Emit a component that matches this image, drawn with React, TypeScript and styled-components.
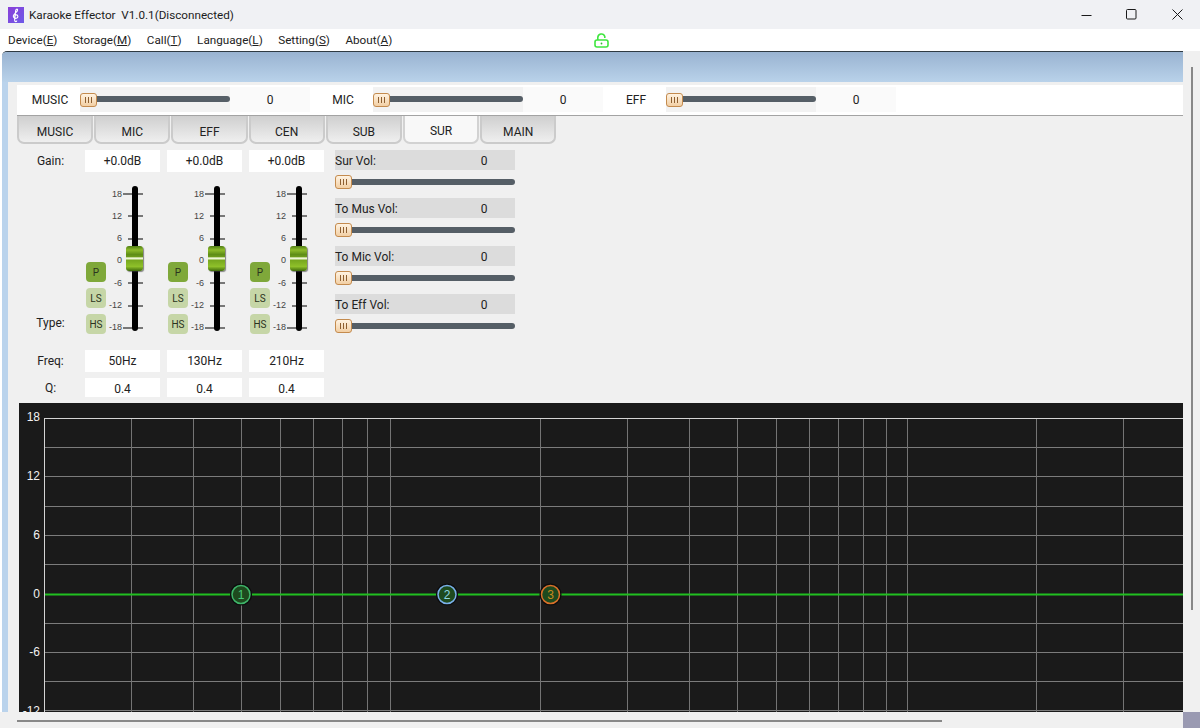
import { Fragment } from 'react';
import styled, { createGlobalStyle } from 'styled-components';

const GlobalStyle = createGlobalStyle`
  html, body {
    margin: 0;
    padding: 0;
    overflow: hidden;
    background: #f0f0f0;
  }
  body {
    font-family: Roboto, "Noto Sans", sans-serif;
    font-size: 12px;
    color: #222;
  }
  * {
    box-sizing: border-box;
  }
`;

const Window = styled.div`
  width: 1200px;
  height: 728px;
  display: flex;
  flex-direction: column;
  overflow: hidden;
`;

const TitleBar = styled.div`
  height: 29px;
  flex: none;
  display: flex;
  align-items: center;
  padding-left: 8px;
  background: #f0f1f4;
`;

const AppIcon = styled.svg`
  width: 16px;
  height: 16px;
  flex: none;
`;

const TitleText = styled.span`
  margin-left: 5px;
  flex: 1;
  font-size: 11.7px;
  color: #1c1c1c;
  white-space: pre;
`;

const WindowButton = styled.button`
  width: 45.5px;
  height: 29px;
  padding: 0;
  border: 0;
  background: none;
  display: flex;
  align-items: center;
  justify-content: center;
`;

const MenuBar = styled.div`
  height: 22px;
  flex: none;
  display: flex;
  align-items: center;
  gap: 15.5px;
  padding-left: 8px;
  background: #fff;
`;

const MenuItem = styled.span`
  font-size: 11.7px;
  color: #222;
  u {
    text-underline-offset: 1px;
  }
`;

const LockIcon = styled.svg`
  width: 15px;
  height: 15px;
  margin-left: 186px;
`;

const Workspace = styled.div`
  flex: 1;
  min-height: 0;
  display: flex;
`;

const Panel = styled.div`
  width: 1183px;
  display: flex;
  flex-direction: column;
  padding-left: 2px;
  background: #fff;
`;

const PanelInner = styled.div`
  flex: 1;
  display: flex;
  flex-direction: column;
  border-top: 1px solid #2f3a42;
  border-top-left-radius: 5px;
  background: #bad3ec;
  overflow: hidden;
`;

const BlueHeader = styled.div`
  height: 30px;
  flex: none;
  background: linear-gradient(#99b3d1, #b9d2ea);
`;

const Content = styled.div`
  flex: 1;
  margin-left: 6px;
  padding: 3px 0 0 9px;
  display: flex;
  flex-direction: column;
  background: #f0f0f0;
`;

const MasterRow = styled.div`
  height: 31px;
  flex: none;
  display: flex;
  align-items: center;
  padding-bottom: 1px;
  background: #fff;
  border-bottom: 1px solid #a3a3a3;
`;

const MasterLabel = styled.span`
  width: 63px;
  padding: 1px 0 0 3px;
  text-align: center;
`;

const MasterValue = styled.span`
  width: 80px;
  height: 25px;
  line-height: 27px;
  text-align: center;
  background: #fafafa;
`;

const SliderBox = styled.div<{ $master?: boolean }>`
  position: relative;
  width: ${(p) => (p.$master ? '150px' : '180px')};
  height: ${(p) => (p.$master ? '25px' : '14px')};
  margin-top: ${(p) => (p.$master ? '0' : '5px')};
  display: flex;
  align-items: center;
  background: ${(p) => (p.$master ? '#f2f2f2' : 'transparent')};
`;

const SliderTrack = styled.div<{ $master?: boolean }>`
  width: 100%;
  height: 6px;
  margin-top: ${(p) => (p.$master ? '-1px' : '0')};
  border-radius: 0 3px 3px 0;
  background: #555e66;
`;

const SliderThumb = styled.div`
  position: absolute;
  left: 0;
  top: 50%;
  width: 17px;
  height: 14px;
  margin-top: -7px;
  display: flex;
  align-items: center;
  justify-content: center;
  border: 1px solid #c48b4e;
  border-radius: 3px;
  background: linear-gradient(#fff3e2, #f2cfa4);
  &::after {
    content: '';
    width: 7px;
    height: 6px;
    background: repeating-linear-gradient(90deg, #8d5f31 0 1px, transparent 1px 3px);
  }
`;

const TabRow = styled.div`
  height: 28px;
  flex: none;
  display: flex;
  gap: 1px;
`;

const Tab = styled.div<{ $active?: boolean }>`
  width: 76.2px;
  height: 28px;
  display: flex;
  align-items: center;
  justify-content: center;
  padding-top: ${(p) => (p.$active ? '4px' : '6px')};
  border: 2px solid ${(p) => (p.$active ? '#d2d2d2' : '#cbcbcb')};
  border-top: 0;
  border-radius: 0 0 7px 7px;
  background: ${(p) => (p.$active ? '#f8f8f8' : 'linear-gradient(#cfcfcf, #efefef)')};
`;

const Controls = styled.div`
  height: 259px;
  flex: none;
  display: flex;
  padding-top: 6px;
`;

const EqGrid = styled.div`
  display: grid;
  grid-template-columns: 61px repeat(3, 75px);
  grid-template-rows: 22px 178px 22px 25px;
  column-gap: 7px;
  height: 247px;
`;

const RowLabel = styled.span<{ $align?: string }>`
  align-self: ${(p) => p.$align || 'center'};
  width: 67px;
  text-align: center;
  line-height: 16px;
  margin-bottom: ${(p) => (p.$align === 'end' ? '19px' : '0')};
`;

const QLabel = styled(RowLabel)`
  align-self: end;
  line-height: 19px;
  margin-bottom: -1px;
`;

const ValueBox = styled.div<{ $short?: boolean }>`
  height: ${(p) => (p.$short ? '19px' : '22px')};
  align-self: end;
  display: flex;
  align-items: center;
  justify-content: center;
  padding-top: ${(p) => (p.$short ? '2px' : '0')};
  background: #fff;
`;

const Fader = styled.div`
  display: flex;
  align-items: flex-start;
  height: 178px;
`;

const TypeColumn = styled.div`
  width: 20px;
  margin: 90px 0 0 1px;
  display: flex;
  flex-direction: column;
  gap: 6px;
`;

const TypeButton = styled.div<{ $on?: boolean }>`
  width: 20px;
  height: 20px;
  display: flex;
  align-items: center;
  justify-content: center;
  border-radius: 4px;
  font-size: 10px;
  color: #2c3320;
  background: ${(p) => (p.$on ? '#7fa83a' : '#c6d6a7')};
`;

const Scale = styled.div`
  position: relative;
  width: 34px;
  height: 145px;
  margin: 16.5px 0 0 3px;
  display: flex;
  flex-direction: column;
  justify-content: space-between;
`;

const ScaleRow = styled.div`
  height: 11px;
  display: flex;
  align-items: center;
`;

const ScaleText = styled.span`
  width: 13px;
  flex: none;
  text-align: right;
  font-family: "Liberation Sans", Arial, sans-serif;
  font-size: 9px;
  line-height: 11px;
  color: #444;
`;

const ScaleTick = styled.span<{ $long?: boolean }>`
  flex: 1;
  height: 2px;
  margin-left: ${(p) => (p.$long ? '1px' : '6px')};
  background: #777;
`;

const FaderTrack = styled.div`
  position: absolute;
  left: 23px;
  top: -2.5px;
  width: 6px;
  height: 145px;
  border-radius: 3px;
  background: #000;
`;

const FaderThumb = styled.div`
  position: absolute;
  left: 17px;
  top: 57.5px;
  width: 17px;
  height: 25px;
  border-radius: 3px;
  box-shadow: 1px 1px 1px rgba(60, 60, 60, 0.6);
  background: linear-gradient(
    #4f7d12 0,
    #8dbb2a 16%,
    #5f8e16 34%,
    #6d9c1b 44%,
    #eef7d4 47%,
    #eef7d4 52%,
    #76a61e 56%,
    #8fc02a 82%,
    #3f6a0c 100%
  );
`;

const VolumeColumn = styled.div`
  width: 180px;
  margin-left: 11px;
  display: flex;
  flex-direction: column;
  gap: 9px;
`;

const VolumeGroup = styled.div`
  display: flex;
  flex-direction: column;
`;

const VolumeHead = styled.div`
  height: 20px;
  display: flex;
  align-items: center;
  padding-top: 1px;
  background: #dcdcdc;
`;

const VolumeName = styled.span`
  flex: 1;
`;

const VolumeValue = styled.span`
  width: 62px;
  text-align: center;
`;

const Graph = styled.div`
  width: 1164px;
  height: 309px;
  flex: none;
  margin-left: 2px;
  background: #1a1a1a;
  overflow: hidden;
`;

const GraphSvg = styled.svg`
  display: block;
  font-family: "Liberation Sans", Arial, sans-serif;
  font-size: 12px;
`;

const ScrollGutter = styled.div`
  width: 17px;
  flex: none;
  padding: 16px 0 0 8px;
  background: #f0f0f0;
`;

const ScrollBarY = styled.div`
  width: 2px;
  height: 543px;
  background: #888;
`;

const BottomBar = styled.div`
  height: 16px;
  flex: none;
  display: flex;
  background: #f0f0f0;
`;

const ScrollArea = styled.div`
  width: 1183px;
  padding: 8px 0 0 17px;
`;

const ScrollBarX = styled.div`
  width: 925px;
  height: 2px;
  background: #888;
`;

const Corner = styled.div`
  flex: 1;
  background: #9a9ab2;
`;

const menus = [
  ['Device', 'E'],
  ['Storage', 'M'],
  ['Call', 'T'],
  ['Language', 'L'],
  ['Setting', 'S'],
  ['About', 'A'],
];

const ticks = ['18', '12', '6', '0', '-6', '-12', '-18'];

const channels = [{ freq: '50Hz' }, { freq: '130Hz' }, { freq: '210Hz' }];

const volumes = ['Sur Vol:', 'To Mus Vol:', 'To Mic Vol:', 'To Eff Vol:'];

const masters = ['MUSIC', 'MIC', 'EFF'];

const tabs = ['MUSIC', 'MIC', 'EFF', 'CEN', 'SUB', 'SUR', 'MAIN'];

// graph coordinates are relative to the black box at (19, 403)
const gridX = [112, 174, 222, 261, 294, 323, 348, 371, 521, 608, 670, 718, 757, 790, 819, 844, 867, 888, 1017, 1104];
const gridY = [44, 73, 103, 132, 161, 220, 249, 278, 307];
const yLabels: [string, number][] = [
  ['18', 18],
  ['12', 77],
  ['6', 136],
  ['0', 195],
  ['-6', 253],
  ['-12', 312],
];

const nodes = [
  { x: 222, ring: '#3fb56a', text: '#46c878', label: '1' },
  { x: 428, ring: '#7ab0e8', text: '#8fd6e0', label: '2' },
  { x: 531.5, ring: '#d9702a', text: '#c88a20', label: '3' },
];

function Slider({ master }: { master?: boolean }) {
  return (
    <SliderBox $master={master}>
      <SliderTrack $master={master} />
      <SliderThumb />
    </SliderBox>
  );
}

function EqGraph() {
  return (
    <GraphSvg width="1164" height="309" viewBox="0 0 1164 309">
      {gridY.map((y) => (
        <line key={y} x1="25" x2="1164" y1={y + 0.5} y2={y + 0.5} stroke="#7c7c7c" />
      ))}
      {gridX.map((x) => (
        <line key={x} x1={x + 0.5} x2={x + 0.5} y1="15" y2="309" stroke="#747474" />
      ))}
      <line x1="25" x2="1164" y1="15.5" y2="15.5" stroke="#d4d4d4" />
      <line x1="25.5" x2="25.5" y1="15" y2="309" stroke="#d4d4d4" />
      {yLabels.map(([text, y]) => (
        <text key={text} x="21" y={y} textAnchor="end" fill="#f2f2f2">
          {text}
        </text>
      ))}
      <line x1="26" x2="1164" y1="191.5" y2="191.5" stroke="#20c020" strokeWidth="2" />
      {nodes.map((n) => (
        <g key={n.label}>
          <circle cx={n.x} cy="191.5" r="11" fill="#0c0c0c" />
          <circle cx={n.x} cy="191.5" r="9" fill="#1e4a1e" stroke={n.ring} strokeWidth="1.5" />
          <text x={n.x} y="196" textAnchor="middle" fill={n.text}>
            {n.label}
          </text>
        </g>
      ))}
    </GraphSvg>
  );
}

export default function App() {
  return (
    <Window>
      <GlobalStyle />
      <TitleBar>
        <AppIcon viewBox="0 0 16 16">
          <defs>
            <linearGradient id="appIconFill" x1="0" y1="0" x2="1" y2="1">
              <stop offset="0" stopColor="#8a3fd8" />
              <stop offset="1" stopColor="#6d5ae8" />
            </linearGradient>
          </defs>
          <rect width="16" height="16" fill="url(#appIconFill)" />
          <path
            d="M8.6 13.5c.4 1.4-1.8 1.7-2-.4L7.6 4c.1-1.8 1.9-2.6 2-1 .1 1.6-3.6 3.8-4.2 5.7-.5 1.9 1.4 3 3 2.6 2-.5 2-3.3-.1-3.4-1.6-.1-2.3 1.9-1 2.8"
            fill="none"
            stroke="#fff"
            strokeWidth="1.1"
          />
        </AppIcon>
        <TitleText>Karaoke Effector  V1.0.1(Disconnected)</TitleText>
        <WindowButton>
          <svg width="11" height="11" viewBox="0 0 11 11">
            <line x1="0.5" x2="10.5" y1="6.5" y2="6.5" stroke="#1a1a1a" />
          </svg>
        </WindowButton>
        <WindowButton>
          <svg width="11" height="11" viewBox="0 0 11 11">
            <rect x="0.5" y="0.5" width="9.5" height="9.5" rx="1" fill="none" stroke="#1a1a1a" />
          </svg>
        </WindowButton>
        <WindowButton>
          <svg width="11" height="11" viewBox="0 0 11 11">
            <path d="M0.5 0.5 L10.5 10.5 M10.5 0.5 L0.5 10.5" stroke="#1a1a1a" />
          </svg>
        </WindowButton>
      </TitleBar>
      <MenuBar>
        {menus.map(([name, key]) => (
          <MenuItem key={key}>
            {name}(<u>{key}</u>)
          </MenuItem>
        ))}
        <LockIcon viewBox="0 0 15 15">
          <rect x="1" y="7" width="13" height="7" rx="2" fill="none" stroke="#3fe63f" strokeWidth="1.6" />
          <path d="M3.8 7V4.6a3.6 3.6 0 0 1 7-1.2V5" fill="none" stroke="#3fe63f" strokeWidth="1.6" />
          <circle cx="7.5" cy="10.5" r="0.9" fill="#2fbf2f" />
        </LockIcon>
      </MenuBar>
      <Workspace>
        <Panel>
          <PanelInner>
            <BlueHeader />
            <Content>
              <MasterRow>
                {masters.map((m) => (
                  <Fragment key={m}>
                    <MasterLabel>{m}</MasterLabel>
                    <Slider master />
                    <MasterValue>0</MasterValue>
                  </Fragment>
                ))}
              </MasterRow>
              <TabRow>
                {tabs.map((t) => (
                  <Tab key={t} $active={t === 'SUR'}>
                    {t}
                  </Tab>
                ))}
              </TabRow>
              <Controls>
                <EqGrid>
                  <RowLabel>Gain:</RowLabel>
                  {channels.map((c) => (
                    <ValueBox key={c.freq}>+0.0dB</ValueBox>
                  ))}
                  <RowLabel $align="end">Type:</RowLabel>
                  {channels.map((c) => (
                    <Fader key={c.freq}>
                      <TypeColumn>
                        <TypeButton $on>P</TypeButton>
                        <TypeButton>LS</TypeButton>
                        <TypeButton>HS</TypeButton>
                      </TypeColumn>
                      <Scale>
                        {ticks.map((t) => (
                          <ScaleRow key={t}>
                            <ScaleText>{t}</ScaleText>
                            <ScaleTick $long={t === '18' || t === '-18'} />
                          </ScaleRow>
                        ))}
                        <FaderTrack />
                        <FaderThumb />
                      </Scale>
                    </Fader>
                  ))}
                  <RowLabel>Freq:</RowLabel>
                  {channels.map((c) => (
                    <ValueBox key={c.freq}>{c.freq}</ValueBox>
                  ))}
                  <QLabel>Q:</QLabel>
                  {channels.map((c) => (
                    <ValueBox key={c.freq} $short>
                      0.4
                    </ValueBox>
                  ))}
                </EqGrid>
                <VolumeColumn>
                  {volumes.map((v) => (
                    <VolumeGroup key={v}>
                      <VolumeHead>
                        <VolumeName>{v}</VolumeName>
                        <VolumeValue>0</VolumeValue>
                      </VolumeHead>
                      <Slider />
                    </VolumeGroup>
                  ))}
                </VolumeColumn>
              </Controls>
              <Graph>
                <EqGraph />
              </Graph>
            </Content>
          </PanelInner>
        </Panel>
        <ScrollGutter>
          <ScrollBarY />
        </ScrollGutter>
      </Workspace>
      <BottomBar>
        <ScrollArea>
          <ScrollBarX />
        </ScrollArea>
        <Corner />
      </BottomBar>
    </Window>
  );
}
